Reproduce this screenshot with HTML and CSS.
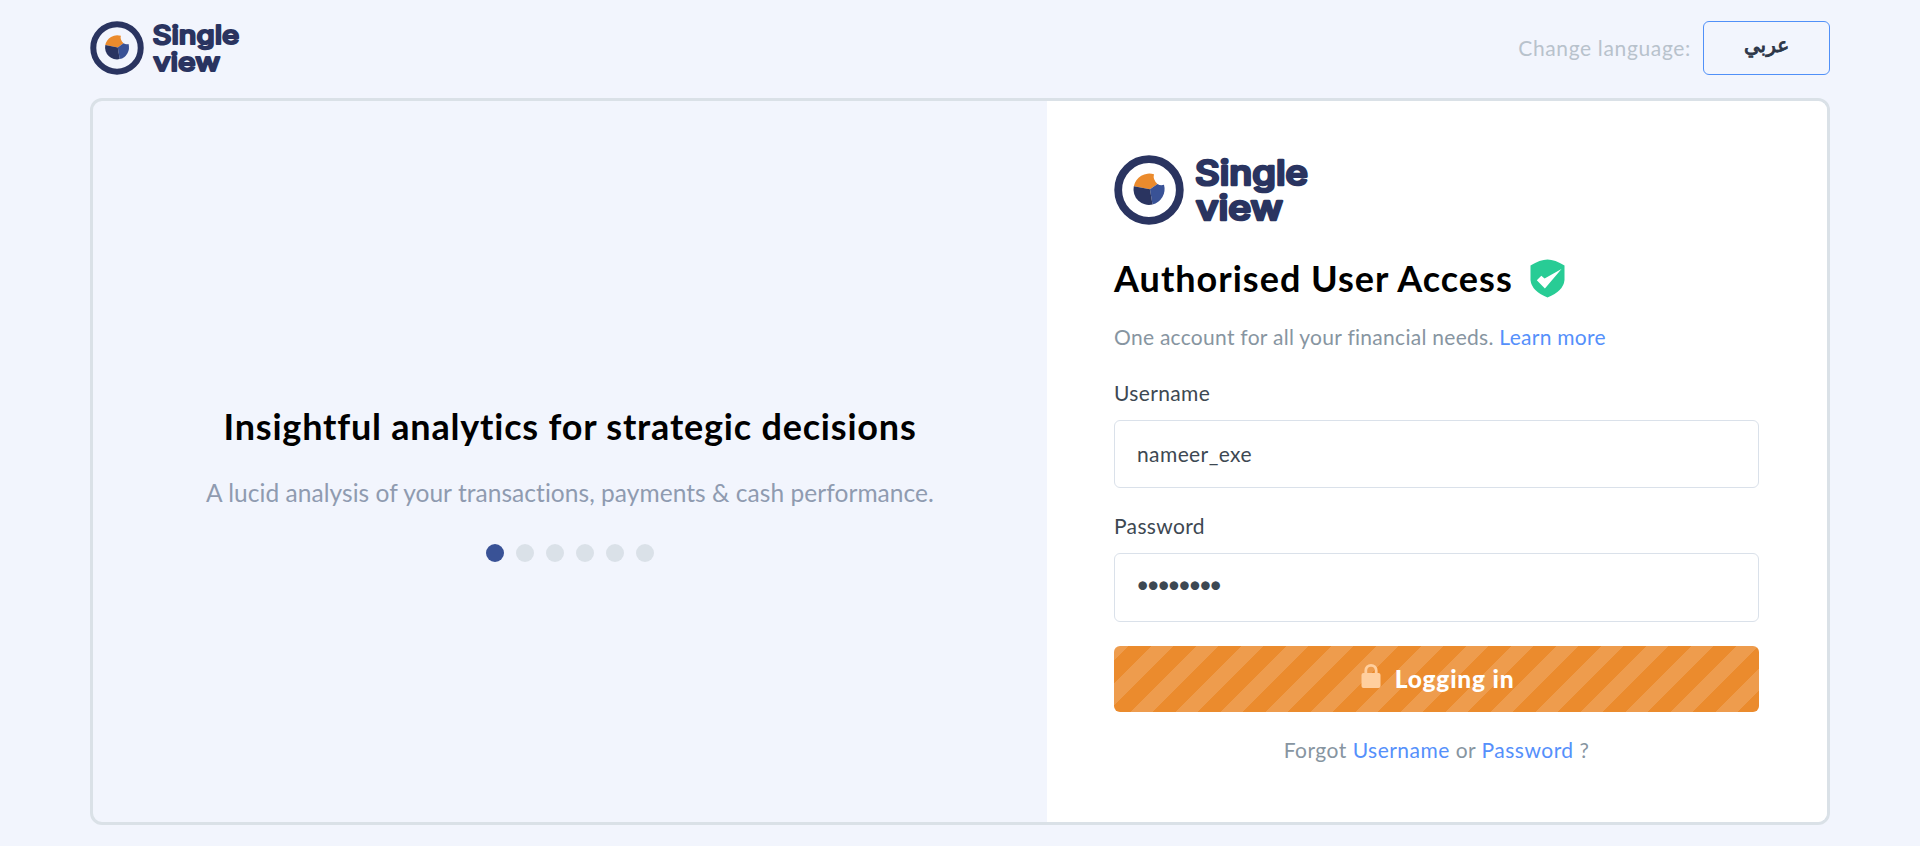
FILE: index.html
```html
<!DOCTYPE html>
<html lang="en">
<head>
<meta charset="utf-8">
<title>Single view</title>
<link rel="stylesheet" href="styles.css">
</head>
<body>
<div class="page">
  <header class="topbar">
    <svg class="logo-small" viewBox="0 0 196 76">
      <circle cx="35" cy="35" r="30.8" fill="none" stroke="#2a3460" stroke-width="7.8"/>
      <path d="M36 34.3 19.8 31.3A15.8 15.8 0 0 1 40 19.3Q38.5 24.5 43.5 29Z" fill="#eb8b2d"/>
      <path d="M36 34.3 43.5 29Q46.5 31 50 29.8A15.8 15.8 0 0 1 38.5 49.5Z" fill="#395296"/>
      <path d="M36 34.3 38.5 49.5A15.5 15.5 0 0 1 19.8 31.3Z" fill="#2a3460"/>
      <text class="logo-text" x="81" y="30.2" textLength="113" lengthAdjust="spacingAndGlyphs">Single</text>
      <text class="logo-text" x="82" y="64.7" textLength="87" lengthAdjust="spacingAndGlyphs">view</text>
    </svg>
    <div class="language">
      <span class="language-label">Change language:</span>
      <button class="language-button" lang="ar">عربي</button>
    </div>
  </header>
  <main class="card">
    <section class="promo">
      <h2 class="promo-title">Insightful analytics for strategic decisions</h2>
      <p class="promo-text">A lucid analysis of your transactions, payments &amp; cash performance.</p>
      <div class="dots"><i class="dot active"></i><i class="dot"></i><i class="dot"></i><i class="dot"></i><i class="dot"></i><i class="dot"></i></div>
    </section>
    <section class="login">
      <svg class="logo-large" viewBox="0 0 196 76">
        <circle cx="35" cy="35" r="30.8" fill="none" stroke="#2a3460" stroke-width="7.8"/>
        <path d="M36 34.3 19.8 31.3A15.8 15.8 0 0 1 40 19.3Q38.5 24.5 43.5 29Z" fill="#eb8b2d"/>
        <path d="M36 34.3 43.5 29Q46.5 31 50 29.8A15.8 15.8 0 0 1 38.5 49.5Z" fill="#395296"/>
        <path d="M36 34.3 38.5 49.5A15.5 15.5 0 0 1 19.8 31.3Z" fill="#2a3460"/>
        <text class="logo-text" x="81" y="30.2" textLength="113" lengthAdjust="spacingAndGlyphs">Single</text>
        <text class="logo-text" x="82" y="64.7" textLength="87" lengthAdjust="spacingAndGlyphs">view</text>
      </svg>
      <div class="title-row">
        <h1 class="title">Authorised User Access</h1>
        <svg class="shield" viewBox="0 0 35 39"><path d="M17.5 .5Q25 .5 34.5 6.5V21Q33.500 32 17.500 38.500Q1.500 32 .5 21V6.500Q10 .5 17.500 .5Z" fill="#28cc95"/><path d="M6.800 21.200 11.300 16.700 14.600 19.600 31.500 10 14.900 29.500Z" fill="#fff"/></svg>
      </div>
      <p class="intro">One account for all your financial needs. <a class="link">Learn more</a></p>
      <label class="label" for="user">Username</label>
      <input class="field" id="user" type="text" value="nameer_exe">
      <label class="label label-password" for="pass">Password</label>
      <input class="field password" id="pass" type="password" value="password">
      <button class="submit">
        <svg class="lock" viewBox="0 0 20 26"><path d="M4.8 12V7.5a5.2 5.2 0 0 1 10.4 0V12" fill="none" stroke="#ffcf9e" stroke-width="2.8"/><rect x=".5" y="10" width="19" height="15" rx="2" fill="#ffcf9e"/></svg>
        <span class="submit-text">Logging in</span>
      </button>
      <p class="forgot">Forgot <a class="link">Username</a> or <a class="link">Password</a> ?</p>
    </section>
  </main>
</div>
</body>
</html>
```
FILE: styles.css
```css
* { box-sizing: border-box; }
body { margin: 0; background: #f2f5fd; font-family: Lato, "Liberation Sans", sans-serif; color: #3d4852; }
h1, h2, p { margin: 0; white-space: nowrap; }
.logo-text { font: 500 33.5px Inter, sans-serif; fill: #2a3460; stroke: #2a3460; stroke-width: 2.6px; stroke-linejoin: round; }
.page { width: 1740px; height: 846px; margin: 0 auto; padding-top: 21px; }
.topbar { display: flex; justify-content: space-between; height: 77px; }
.logo-small { width: 151px; height: 58.5px; overflow: visible; }
.language { display: flex; height: 54px; align-items: center; gap: 12px; }
.language-label { font-size: 21px; line-height: 26px; color: #b8c2cc; letter-spacing: .65px; }
.language-button { width: 127px; height: 54px; padding: 0 0 6px; border: 1px solid #5090f8; border-radius: 6px; background: transparent; color: #2d3748; font: 20px "DejaVu Sans", sans-serif; -webkit-text-stroke: .9px #2d3748; }
.card { display: flex; height: 727px; border: 3px solid #dae1e7; border-radius: 12px; overflow: hidden; }
.promo { width: 954px; padding-top: 304px; display: flex; flex-direction: column; align-items: center; }
.promo-title { font-size: 36px; line-height: 42px; font-weight: 700; color: #000; letter-spacing: .8px; }
.promo-text { margin-top: 31px; font-size: 24.5px; line-height: 30px; color: #8f9bb0; letter-spacing: .05px; }
.dots { display: flex; gap: 12px; margin-top: 36px; }
.dot { width: 18px; height: 18px; border-radius: 50%; background: #dae1e8; }
.dot.active { background: #395296; }
.login { flex: 1; padding: 54px 68px 0 67px; background: #fff; display: flex; flex-direction: column; }
.logo-large { width: 196px; height: 76px; flex: none; overflow: visible; }
.title-row { display: flex; align-items: center; gap: 17px; height: 42px; margin-top: 26px; }
.title { font-size: 36px; line-height: 42px; font-weight: 700; color: #000; letter-spacing: 1px; }
.shield { width: 35px; height: 39px; }
.intro { margin-top: 23px; font-size: 21px; line-height: 30px; color: #8795a1; letter-spacing: .28px; }
.link { color: #5590fb; }
.label { margin-top: 26px; font-size: 21px; line-height: 30px; letter-spacing: .35px; }
.field { width: 645px; height: 68px; margin: 12px 0 0; padding: 0 22px 2px; border: 1px solid #dae1ea; border-radius: 6px; background: #fff; color: #3d4852; font: 21px Lato, sans-serif; letter-spacing: .4px; outline: 0; }
.label-password { margin-top: 23px; }
.password { height: 69px; padding: 0 21px 7px; font-size: 23px; letter-spacing: -2.9px; }
.submit { display: flex; align-items: center; justify-content: center; gap: 14px; height: 66px; margin: 24px 0 0; padding: 0; border: 0; border-radius: 6px; background: repeating-linear-gradient(135deg, #ee9c4d 0 10.5px, #eb8b2d 10.5px 26.3px, #ee9c4d 26.3px 31.82px); color: #fff; }
.lock { width: 20px; height: 26px; margin-top: -7px; }
.submit-text { margin-right: -2px; font: 900 24.5px/28px Lato, sans-serif; letter-spacing: .8px; }
.forgot { margin-top: 23px; text-align: center; font-size: 21px; line-height: 30px; color: #8795a1; letter-spacing: .48px; }
```
